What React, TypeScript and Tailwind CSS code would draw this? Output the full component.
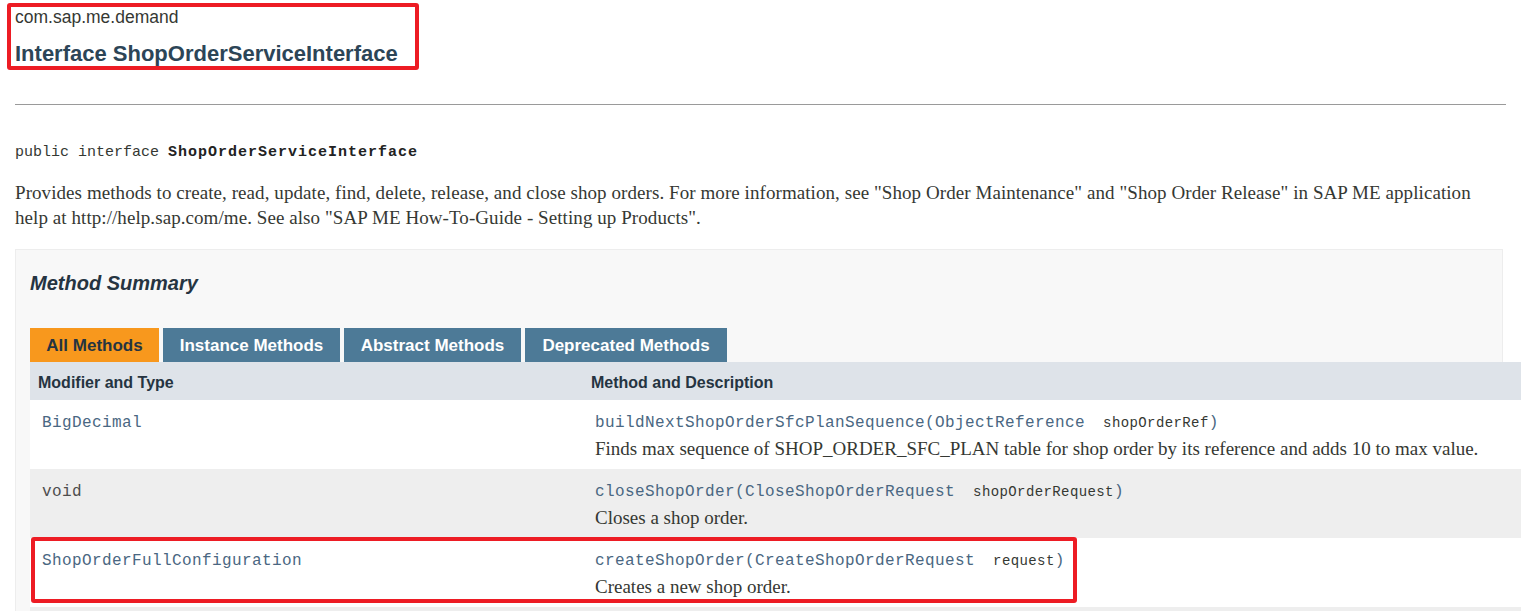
const SANS = "font-['Liberation_Sans',Arial,sans-serif]";
const SERIF = "font-['Liberation_Serif','Times_New_Roman',serif]";
const MONO = "font-['Liberation_Mono','Courier_New',monospace]";

type Row = {
  type: string;
  typeLink: boolean;
  name: string;
  paramType: string;
  param: string;
  desc: string;
  shade: boolean;
  marked?: boolean;
};

const ROWS: Row[] = [
  {
    type: "BigDecimal",
    typeLink: true,
    name: "buildNextShopOrderSfcPlanSequence",
    paramType: "ObjectReference",
    param: "shopOrderRef",
    desc: "Finds max sequence of SHOP_ORDER_SFC_PLAN table for shop order by its reference and adds 10 to max value.",
    shade: false,
  },
  {
    type: "void",
    typeLink: false,
    name: "closeShopOrder",
    paramType: "CloseShopOrderRequest",
    param: "shopOrderRequest",
    desc: "Closes a shop order.",
    shade: true,
  },
  {
    type: "ShopOrderFullConfiguration",
    typeLink: true,
    name: "createShopOrder",
    paramType: "CreateShopOrderRequest",
    param: "request",
    desc: "Creates a new shop order.",
    shade: false,
    marked: true,
  },
];

const TABS = [
  { label: "All Methods", w: "w-[129px]", active: true },
  { label: "Instance Methods", w: "w-[177px]", active: false },
  { label: "Abstract Methods", w: "w-[177px]", active: false },
  { label: "Deprecated Methods", w: "w-[202px]", active: false },
];

export default function App() {
  return (
    <div className="h-[611px] w-[1521px] overflow-hidden bg-white text-[#353833]">
      {/* package + title, with the red annotation box */}
      <div className="relative px-[15px] pt-[7px]">
        <div className={`${SANS} text-[17.5px] leading-[20px] text-[#353833]`}>com.sap.me.demand</div>
        <h2 className={`${SANS} mt-[14px] text-[22px] font-bold leading-[26px] text-[#2c4557]`}>
          Interface ShopOrderServiceInterface
        </h2>
        <div className="absolute left-[7px] top-[3px] h-[67px] w-[412px] rounded-[3px] border-4 border-[#ed1c24]" />
      </div>

      <hr className="mx-[15px] mt-[37px] border-t border-[#9a9a9a]" />

      <div className={`${MONO} ml-[15px] mt-[39px] text-[15px] leading-[18px] text-[#353833]`}>
        public interface <span className="font-bold tracking-[1px] text-[#222]">ShopOrderServiceInterface</span>
      </div>

      <p className={`${SERIF} ml-[15px] mt-[18px] w-[1475px] text-[19px] leading-[25px] tracking-[0.07px] text-[#353833]`}>
        Provides methods to create, read, update, find, delete, release, and close shop orders. For more
        information, see "Shop Order Maintenance" and "Shop Order Release" in SAP ME application help at
        http://help.sap.com/me. See also "SAP ME How-To-Guide - Setting up Products".
      </p>

      {/* method summary block */}
      <div className="ml-[15px] mt-[19px] w-[1488px] border border-[#ededed] bg-[#f8f8f8] pl-[14px] pt-[21px]">
        <h3 className={`${SANS} text-[20px] font-bold italic leading-[24px] text-[#253441]`}>Method Summary</h3>

        <div className="mt-[33px] flex gap-[4px]">
          {TABS.map((t) => (
            <div
              key={t.label}
              className={`${SANS} ${t.w} flex h-[34px] items-center justify-center pt-[2px] text-[17px] font-bold ${
                t.active ? "bg-[#f8981d] text-[#253441]" : "bg-[#4d7a97] text-white"
              }`}
            >
              {t.label}
            </div>
          ))}
        </div>

        <div className="w-[1600px]">
          <div className={`${SANS} flex h-[38px] items-center bg-[#dee3e9] pt-[4px] text-[16px] font-bold text-[#253441]`}>
            <div className="w-[553px] pl-[8px]">Modifier and Type</div>
            <div className="pl-[8px]">Method and Description</div>
          </div>

          {ROWS.map((r) => (
            <div key={r.name} className={`relative flex h-[69px] ${r.shade ? "bg-[#eeeeee]" : "bg-white"}`}>
              <div className={`${MONO} w-[553px] pl-[12px] pt-[13px] text-[16px] leading-[20px] tracking-[0.4px]`}>
                <span className={r.typeLink ? "text-[#4a6782]" : "text-[#4d4d4d]"}>{r.type}</span>
              </div>
              <div className="pl-[12px] pt-[13px]">
                <div className={`${MONO} text-[16px] leading-[20px] tracking-[0.4px]`}>
                  <span className="text-[#4a6782]">{r.name}</span>
                  <span className="text-[#4a6782]">(</span>
                  <span className="text-[#4a6782]">{r.paramType}</span>
                  <span className="ml-[18px] text-[14px] text-[#353833]">{r.param}</span>
                  <span className="text-[#4a6782]">)</span>
                </div>
                <div className={`${SERIF} mt-[6px] text-[19px] leading-[20px] text-[#353833]`}>{r.desc}</div>
              </div>
              {r.marked && (
                <div className="absolute left-[1px] top-[-1px] h-[66px] w-[1046px] rounded-[3px] border-4 border-[#ed1c24]" />
              )}
            </div>
          ))}
          <div className="h-[69px] bg-[#eeeeee]" />
        </div>
      </div>
    </div>
  );
}
